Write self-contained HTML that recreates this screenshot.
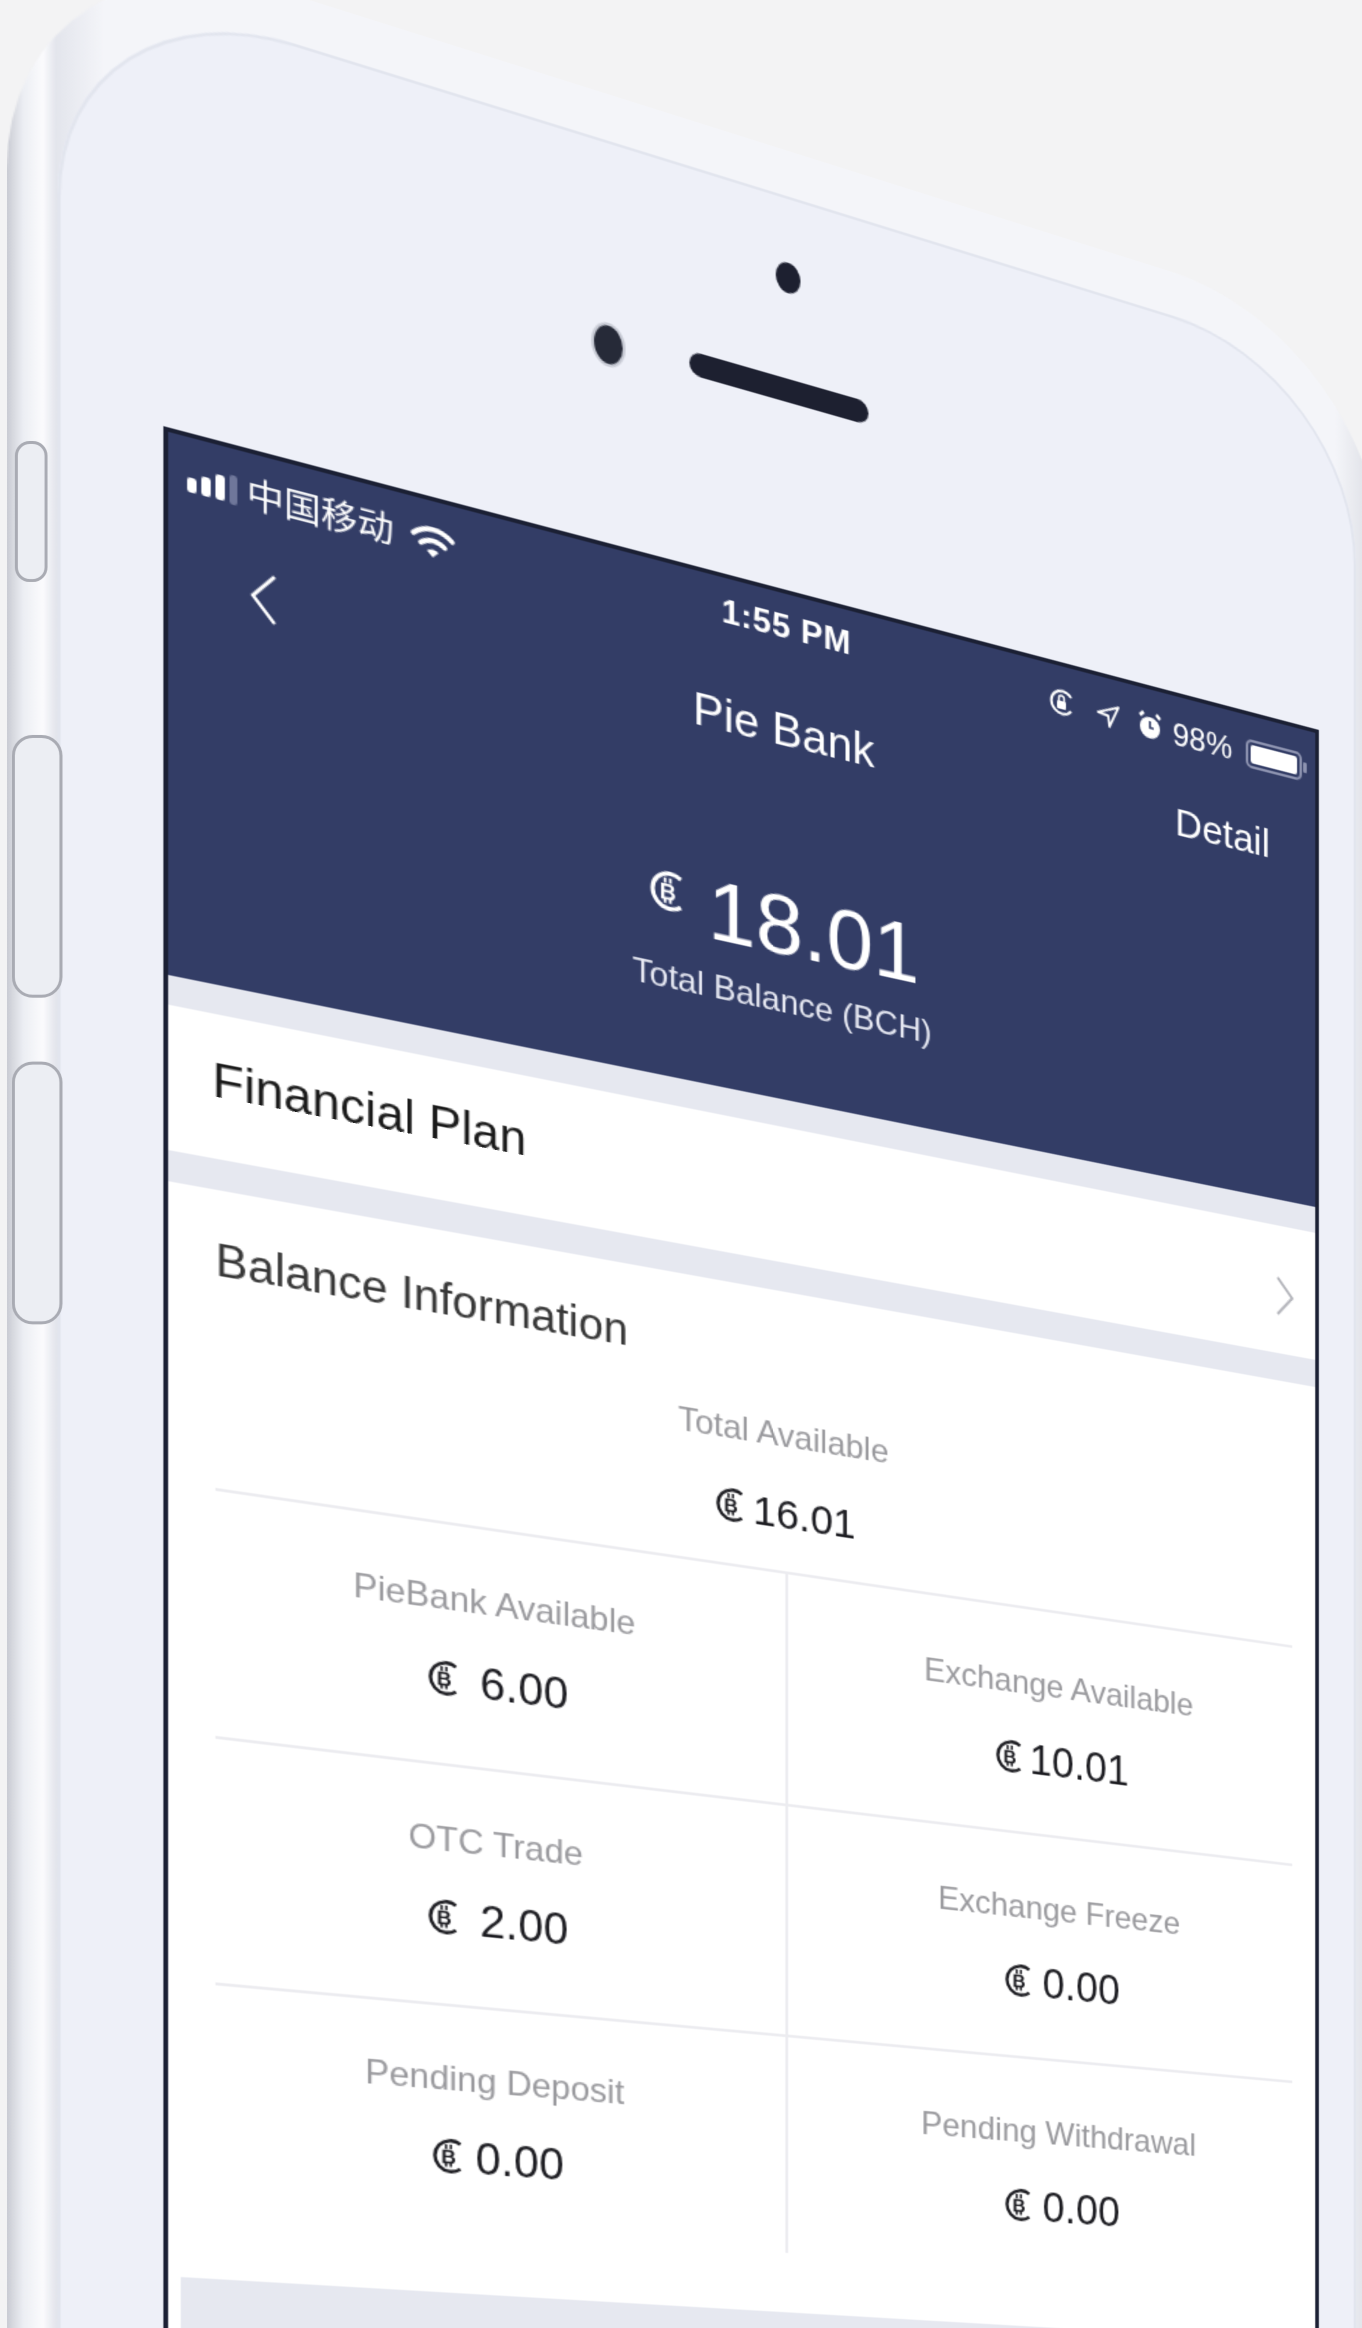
<!DOCTYPE html>
<html><head><meta charset="utf-8">
<style>
*{margin:0;padding:0;box-sizing:border-box}
html,body{width:1362px;height:2328px;overflow:hidden;background:#f3f3f4}
#root{position:relative;width:1362px;height:2328px;overflow:hidden;background:#f3f3f4;contain:strict}
#wrap{position:absolute;left:0;top:0;width:917px;height:1568px;transform:scale(1.48528,1.48469);transform-origin:0 0;overflow:hidden}
#persp{position:absolute;left:0;top:0;width:0;height:0;transform-origin:0 0;
 transform:matrix3d(1.0876,0.3314,0,0.0001756, 0,1,0,0, 0,0,1,0, 110,287,0,1)}
.abs{position:absolute}
.silver{left:-97px;top:-318px;width:985px;height:1608px;border-radius:175px 175px 0 0;
 background:linear-gradient(90deg,#c9cbd3 0,#eceef3 10px,#fbfbfd 22px,#e3e5ec 30px,#f4f5f9 60px,#f4f5f9 96%,#d7d9e0 100%)}
.face{left:-66px;top:-285px;width:932px;height:1575px;border-radius:150px 150px 0 0;background:#eef0f8;
 box-shadow:inset 0 0 0 2px #e2e5ee}
.screen{left:0;top:0;width:835px;height:1290px;background:#fff;border:3px solid #1b2034;border-bottom:none;overflow:hidden;
 font-family:"Liberation Sans","Noto Sans CJK SC",sans-serif}
.blue{left:0;top:0;width:835px;height:366px;background:#333d66}
.gray{left:0;width:835px;background:#e6e8f0}
.t{position:absolute;white-space:nowrap}
.w{color:#fff}
.coin{display:inline-block;vertical-align:middle}
.lbl{color:#9a9a9e;font-size:24px;line-height:30px;text-align:center}
.val{color:#1d1d22;font-size:31px;line-height:38px;text-align:center}
.hl{position:absolute;height:2px;background:#ececf0}
.btn{position:absolute;border:2px solid #a9abb3;background:#eceef3;border-radius:10px}
</style></head><body>
<div id="root">
<div id="wrap">
 <div id="persp">
  <div class="abs silver"></div>
  <div class="abs face"></div>
  <div class="abs" style="left:352px;top:-153px;width:130px;height:17px;border-radius:9px;background:#1d2030"></div>
  <div class="abs" style="left:414px;top:-237px;width:18px;height:22px;border-radius:50%;background:#1d2030"></div>
  <div class="abs" style="left:285px;top:-154px;width:20px;height:27px;border-radius:50%;background:#262a38;box-shadow:0 0 0 2px #c9ccd6"></div>

  <div class="abs screen">
   <div class="abs blue"></div>
   <svg class="abs" style="left:12px;top:18px" width="36" height="24" viewBox="0 0 36 24">
    <rect x="0" y="9" width="6" height="10" rx="2" fill="#fff"/>
    <rect x="9" y="6" width="6" height="13" rx="2" fill="#fff"/>
    <rect x="18" y="2" width="6" height="17" rx="2" fill="#fff"/>
    <rect x="27" y="0" width="5" height="20" rx="2" fill="#6f779a"/>
   </svg>
   <div class="t w" style="left:50px;top:14px;font-size:24px;line-height:30px">中国移动</div>
   <svg class="abs" style="left:156px;top:16px" width="32" height="26" viewBox="0 0 32 26">
    <path d="M3 9 A19 19 0 0 1 29 9" fill="none" stroke="#fff" stroke-width="3.5" stroke-linecap="round"/>
    <path d="M8 14.5 A12 12 0 0 1 24 14.5" fill="none" stroke="#fff" stroke-width="3.5" stroke-linecap="round"/>
    <path d="M16 23 L12 19 A6 6 0 0 1 20 19 Z" fill="#fff"/>
   </svg>
   <div class="t w" style="left:372px;top:10px;font-size:24px;line-height:30px;font-weight:bold;letter-spacing:0.5px">1:55 PM</div>
   <svg class="abs" style="left:615px;top:16px" width="22" height="24" viewBox="0 0 22 24">
    <path d="M18 16 A8.5 8.5 0 1 1 18 6" fill="none" stroke="#fff" stroke-width="2"/>
    <rect x="7" y="10" width="7" height="6" rx="1" fill="#fff"/><path d="M8.5 10 V8 a2 2 0 0 1 4 0 V10" fill="none" stroke="#fff" stroke-width="1.5"/>
   </svg>
   <svg class="abs" style="left:652px;top:18px" width="20" height="20" viewBox="0 0 20 20">
    <path d="M2 9 L18 2 L11 18 L10 10 Z" fill="none" stroke="#fff" stroke-width="1.8" stroke-linejoin="round"/>
   </svg>
   <svg class="abs" style="left:684px;top:16px" width="22" height="24" viewBox="0 0 22 24">
    <circle cx="11" cy="13" r="8" fill="#fff"/><path d="M3 5 L6 2 M19 5 L16 2" stroke="#fff" stroke-width="2.5"/>
    <path d="M11 8 V13 H14" stroke="#333d66" stroke-width="1.6" fill="none"/>
   </svg>
   <div class="t w" style="left:713px;top:15px;font-size:24px;line-height:30px">98%</div>
   <svg class="abs" style="left:772px;top:17px" width="52" height="24" viewBox="0 0 52 24">
    <rect x="1" y="2" width="44" height="20" rx="4" fill="none" stroke="#8d93b0" stroke-width="2"/>
    <rect x="4" y="5" width="38" height="14" rx="2" fill="#fff"/>
    <rect x="47" y="8" width="3" height="8" rx="1" fill="#8d93b0"/>
   </svg>
   <svg class="abs" style="left:50px;top:78px" width="22" height="36" viewBox="0 0 22 36">
    <path d="M18 2 L4 18 L18 34" fill="none" stroke="#fff" stroke-width="2.4"/>
   </svg>
   <div class="t w" style="left:0;width:835px;text-align:center;top:79px;font-size:33px;line-height:40px">Pie Bank</div>
   <div class="t w" style="left:715px;top:78px;font-size:30px;line-height:36px">Detail</div>
   <div class="t w" style="left:0;width:835px;text-align:center;top:204px;font-size:62px;line-height:74px">
    <svg class="coin" width="30" height="36" viewBox="0 0 24 28" style="margin-right:14px;margin-top:-22px"><path d="M20 6A10 10 0 1 0 20 22" fill="none" stroke="#fff" stroke-width="2.4"/><text x="12.6" y="19" font-size="13" font-weight="bold" text-anchor="middle" font-family="Liberation Sans" fill="#fff">B</text><path d="M11 6.5v3M14 6.5v3M11 18v3M14 18v3" stroke="#fff" stroke-width="1.5"/></svg>18.01</div>
   <div class="t" style="left:0;width:835px;text-align:center;top:281px;font-size:24px;line-height:30px;color:#e6e8f2">Total Balance (BCH)</div>

   <div class="abs gray" style="top:366px;height:20px"></div>
   <div class="t" style="left:28px;top:411px;font-size:33px;line-height:40px;color:#1a1a1a">Financial Plan</div>
   <svg class="abs" style="left:795px;top:424px" width="18" height="32" viewBox="0 0 18 32">
    <path d="M3 2 L15 16 L3 30" fill="none" stroke="#b5b6bc" stroke-width="2"/>
   </svg>
   <div class="abs gray" style="top:484px;height:21px"></div>
   <div class="t" style="left:30px;top:534px;font-size:31px;line-height:38px;color:#383838">Balance Information</div>

   <div class="t lbl" style="left:0;width:835px;top:595px">Total Available</div>
   <div class="t val" style="left:0;width:835px;top:648px;font-size:30px">
    <svg class="coin" width="26" height="30" viewBox="0 0 24 28" style="margin-right:3px;margin-top:-6px"><path d="M20 6A10 10 0 1 0 20 22" fill="none" stroke="#1d1d22" stroke-width="2.2"/><text x="12.6" y="19" font-size="13" font-weight="bold" text-anchor="middle" font-family="Liberation Sans" fill="#1d1d22">B</text><path d="M11 6.5v3M14 6.5v3M11 18v3M14 18v3" stroke="#1d1d22" stroke-width="1.4"/></svg>16.01</div>
   <div class="hl" style="left:30px;width:780px;top:707px"></div>
   <div class="abs" style="left:418px;top:708px;width:2px;height:492px;background:#ececf0"></div>
   <div class="hl" style="left:30px;width:780px;top:875px"></div>
   <div class="hl" style="left:30px;width:780px;top:1042px"></div>

   <div class="t lbl" style="left:15px;width:400px;top:746px">PieBank Available</div>
   <div class="t val" style="left:15px;width:400px;top:798px">
    <svg class="coin" width="26" height="30" viewBox="0 0 24 28" style="margin-right:12px;margin-top:-6px"><path d="M20 6A10 10 0 1 0 20 22" fill="none" stroke="#1d1d22" stroke-width="2.2"/><text x="12.6" y="19" font-size="13" font-weight="bold" text-anchor="middle" font-family="Liberation Sans" fill="#1d1d22">B</text><path d="M11 6.5v3M14 6.5v3M11 18v3M14 18v3" stroke="#1d1d22" stroke-width="1.4"/></svg>6.00</div>
   <div class="t lbl" style="left:425px;width:400px;top:750px">Exchange Available</div>
   <div class="t val" style="left:425px;width:400px;top:802px">
    <svg class="coin" width="26" height="30" viewBox="0 0 24 28" style="margin-right:3px;margin-top:-6px"><path d="M20 6A10 10 0 1 0 20 22" fill="none" stroke="#1d1d22" stroke-width="2.2"/><text x="12.6" y="19" font-size="13" font-weight="bold" text-anchor="middle" font-family="Liberation Sans" fill="#1d1d22">B</text><path d="M11 6.5v3M14 6.5v3M11 18v3M14 18v3" stroke="#1d1d22" stroke-width="1.4"/></svg>10.01</div>

   <div class="t lbl" style="left:15px;width:400px;top:914px">OTC Trade</div>
   <div class="t val" style="left:15px;width:400px;top:964px">
    <svg class="coin" width="26" height="30" viewBox="0 0 24 28" style="margin-right:12px;margin-top:-6px"><path d="M20 6A10 10 0 1 0 20 22" fill="none" stroke="#1d1d22" stroke-width="2.2"/><text x="12.6" y="19" font-size="13" font-weight="bold" text-anchor="middle" font-family="Liberation Sans" fill="#1d1d22">B</text><path d="M11 6.5v3M14 6.5v3M11 18v3M14 18v3" stroke="#1d1d22" stroke-width="1.4"/></svg>2.00</div>
   <div class="t lbl" style="left:425px;width:400px;top:917px">Exchange Freeze</div>
   <div class="t val" style="left:425px;width:400px;top:968px">
    <svg class="coin" width="26" height="30" viewBox="0 0 24 28" style="margin-right:6px;margin-top:-6px"><path d="M20 6A10 10 0 1 0 20 22" fill="none" stroke="#1d1d22" stroke-width="2.2"/><text x="12.6" y="19" font-size="13" font-weight="bold" text-anchor="middle" font-family="Liberation Sans" fill="#1d1d22">B</text><path d="M11 6.5v3M14 6.5v3M11 18v3M14 18v3" stroke="#1d1d22" stroke-width="1.4"/></svg>0.00</div>

   <div class="t lbl" style="left:15px;width:400px;top:1080px">Pending Deposit</div>
   <div class="t val" style="left:15px;width:400px;top:1130px">
    <svg class="coin" width="26" height="30" viewBox="0 0 24 28" style="margin-right:6px;margin-top:-6px"><path d="M20 6A10 10 0 1 0 20 22" fill="none" stroke="#1d1d22" stroke-width="2.2"/><text x="12.6" y="19" font-size="13" font-weight="bold" text-anchor="middle" font-family="Liberation Sans" fill="#1d1d22">B</text><path d="M11 6.5v3M14 6.5v3M11 18v3M14 18v3" stroke="#1d1d22" stroke-width="1.4"/></svg>0.00</div>
   <div class="t lbl" style="left:425px;width:400px;top:1084px">Pending Withdrawal</div>
   <div class="t val" style="left:425px;width:400px;top:1135px">
    <svg class="coin" width="26" height="30" viewBox="0 0 24 28" style="margin-right:6px;margin-top:-6px"><path d="M20 6A10 10 0 1 0 20 22" fill="none" stroke="#1d1d22" stroke-width="2.2"/><text x="12.6" y="19" font-size="13" font-weight="bold" text-anchor="middle" font-family="Liberation Sans" fill="#1d1d22">B</text><path d="M11 6.5v3M14 6.5v3M11 18v3M14 18v3" stroke="#1d1d22" stroke-width="1.4"/></svg>0.00</div>

   <div class="abs" style="left:8px;top:1243px;width:827px;height:47px;background:#e6e8f0"></div>
  </div>
 </div>
 <div class="btn" style="left:10px;top:297px;width:22px;height:95px"></div>
 <div class="btn" style="left:8px;top:495px;width:34px;height:177px;border-radius:14px"></div>
 <div class="btn" style="left:8px;top:715px;width:34px;height:177px;border-radius:14px"></div>
</div>
</div>
</body></html>
